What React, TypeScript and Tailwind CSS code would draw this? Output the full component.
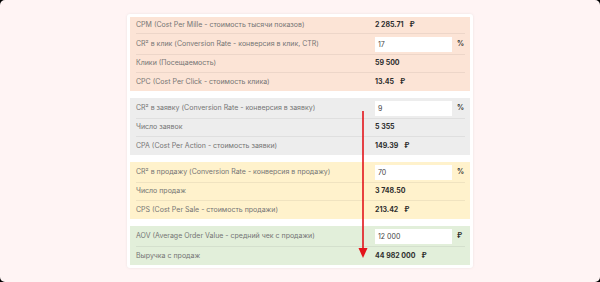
type Row = {
  label: string;
  value?: string;
  input?: string;
  unit?: string;
  h?: string;
};

const sections: { bg: string; rows: Row[] }[] = [
  {
    bg: "bg-[#fce4d6]",
    rows: [
      { label: "CPM (Cost Per Mille - стоимость тысячи показов)", value: "2 285.71", unit: "₽", h: "h-[17px]" },
      { label: "CR² в клик (Conversion Rate - конверсия в клик, CTR)", input: "17", unit: "%" },
      { label: "Клики (Посещаемость)", value: "59 500" },
      { label: "CPC (Cost Per Click - стоимость клика)", value: "13.45", unit: "₽" },
    ],
  },
  {
    bg: "bg-[#ededed]",
    rows: [
      { label: "CR² в заявку (Conversion Rate - конверсия в заявку)", input: "9", unit: "%" },
      { label: "Число заявок", value: "5 355" },
      { label: "CPA (Cost Per Action - стоимость заявки)", value: "149.39", unit: "₽" },
    ],
  },
  {
    bg: "bg-[#fff2cc]",
    rows: [
      { label: "CR² в продажу (Conversion Rate - конверсия в продажу)", input: "70", unit: "%" },
      { label: "Число продаж", value: "3 748.50" },
      { label: "CPS (Cost Per Sale - стоимость продажи)", value: "213.42", unit: "₽" },
    ],
  },
  {
    bg: "bg-[#e2efda]",
    rows: [
      { label: "AOV (Average Order Value - средний чек с продажи)", input: "12 000", unit: "₽" },
      { label: "Выручка с продаж", value: "44 982 000", unit: "₽" },
    ],
  },
];

const RowView = ({ row, last }: { row: Row; last: boolean }) => {
  const height = row.h ?? (row.input ? "h-[21px]" : "h-[18px]");
  return (
    <div
      className={`flex items-center ${height} ${last ? "" : "border-b border-black/[0.06]"}`}
    >
      <div className="w-[239px] text-[#747474] whitespace-nowrap">{row.label}</div>
      {row.input ? (
        <div className="flex items-center">
          <div className="w-[77px] h-[15px] bg-white pl-[3px] leading-[15px] text-[#444]">
            {row.input}
          </div>
          <span className="ml-[5px] font-bold text-[#333]">{row.unit}</span>
        </div>
      ) : (
        <div className="font-bold text-[#2e2e2e] whitespace-nowrap">
          {row.value}
          {row.unit && <span className="ml-[6px]">{row.unit}</span>}
        </div>
      )}
    </div>
  );
};

export default function App() {
  return (
    <div className="bg-black w-[600px] h-[282px]">
      <div
        className="relative w-[600px] h-[282px] rounded-[5px] bg-[#fff4f4] flex items-center justify-center text-[7px]"
        style={{ fontFamily: "Inter, 'Open Sans', sans-serif" }}
      >
        <div className="w-[346px] bg-white rounded-[3px] p-[3px] flex flex-col gap-[7px] shadow-[0_0_3px_rgba(0,0,0,0.08)]">
          {sections.map((s, i) => (
            <div key={i} className={`${s.bg} pl-[6px] pr-[5px]`}>
              {s.rows.map((r, j) => (
                <RowView key={j} row={r} last={j === s.rows.length - 1} />
              ))}
            </div>
          ))}
        </div>
        <svg
          className="absolute left-[357px] top-[110px]"
          width="12"
          height="150"
          viewBox="0 0 12 150"
        >
          <line x1="6" y1="1" x2="6" y2="140" stroke="#e3141b" strokeWidth="1.6" />
          <polygon points="1.5,138 10.5,138 6,148" fill="#e3141b" />
        </svg>
      </div>
    </div>
  );
}
